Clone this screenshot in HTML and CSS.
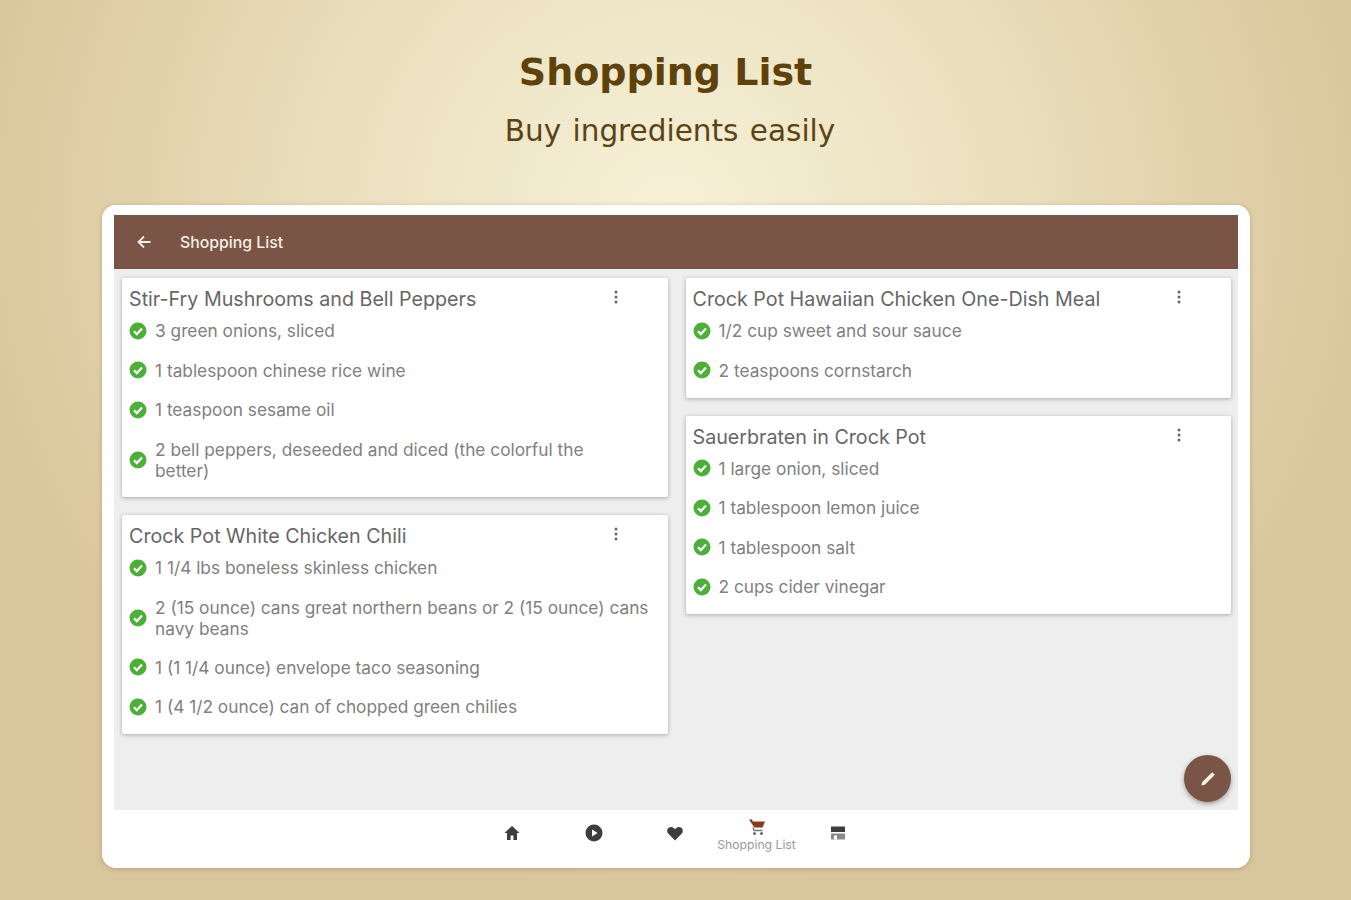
FILE: index.html
```html
<!DOCTYPE html>
<html lang="en">
<head>
<meta charset="UTF-8" />
<title>Shopping List</title>
<link rel="stylesheet" href="styles.css">
</head>
<body>
<svg class="defs" width="0" height="0">
  <symbol id="check" viewBox="0 0 18 18">
    <circle cx="9" cy="9" r="8.5" fill="#4caf38"/>
    <path d="M5 9.3l2.8 2.8L13 6.6" fill="none" stroke="#fff" stroke-width="2.2"/>
  </symbol>
  <symbol id="dots" viewBox="0 0 4 14">
    <circle cx="2" cy="2" r="1.5"/><circle cx="2" cy="7" r="1.5"/><circle cx="2" cy="12" r="1.5"/>
  </symbol>
</svg>

<header class="promo">
  <h1>Shopping List</h1>
  <p>Buy ingredients easily</p>
</header>

<div class="frame">
  <div class="appbar">
    <svg class="back" viewBox="0 0 16 16" width="16" height="16"><path d="M14.5 8H2.5M8 2.5L2.5 8 8 13.5" fill="none" stroke="#f6eee6" stroke-width="1.8"/></svg>
    <span>Shopping List</span>
  </div>

  <div class="content">
    <div class="column">
      <section class="card">
        <div class="card-title"><h2>Stir-Fry Mushrooms and Bell Peppers</h2><svg class="more"><use href="#dots"/></svg></div>
        <ul>
          <li><svg class="tick"><use href="#check"/></svg><span>3 green onions, sliced</span></li>
          <li><svg class="tick"><use href="#check"/></svg><span>1 tablespoon chinese rice wine</span></li>
          <li><svg class="tick"><use href="#check"/></svg><span>1 teaspoon sesame oil</span></li>
          <li class="two-line"><svg class="tick"><use href="#check"/></svg><span>2 bell peppers, deseeded and diced (the colorful the<br>better)</span></li>
        </ul>
      </section>
      <section class="card">
        <div class="card-title"><h2>Crock Pot White Chicken Chili</h2><svg class="more"><use href="#dots"/></svg></div>
        <ul>
          <li><svg class="tick"><use href="#check"/></svg><span>1 1/4 lbs boneless skinless chicken</span></li>
          <li class="two-line"><svg class="tick"><use href="#check"/></svg><span>2 (15 ounce) cans great northern beans or 2 (15 ounce) cans navy beans</span></li>
          <li><svg class="tick"><use href="#check"/></svg><span>1 (1 1/4 ounce) envelope taco seasoning</span></li>
          <li><svg class="tick"><use href="#check"/></svg><span>1 (4 1/2 ounce) can of chopped green chilies</span></li>
        </ul>
      </section>
    </div>
    <div class="column">
      <section class="card">
        <div class="card-title"><h2>Crock Pot Hawaiian Chicken One-Dish Meal</h2><svg class="more"><use href="#dots"/></svg></div>
        <ul>
          <li><svg class="tick"><use href="#check"/></svg><span>1/2 cup sweet and sour sauce</span></li>
          <li><svg class="tick"><use href="#check"/></svg><span>2 teaspoons cornstarch</span></li>
        </ul>
      </section>
      <section class="card">
        <div class="card-title"><h2>Sauerbraten in Crock Pot</h2><svg class="more"><use href="#dots"/></svg></div>
        <ul>
          <li><svg class="tick"><use href="#check"/></svg><span>1 large onion, sliced</span></li>
          <li><svg class="tick"><use href="#check"/></svg><span>1 tablespoon lemon juice</span></li>
          <li><svg class="tick"><use href="#check"/></svg><span>1 tablespoon salt</span></li>
          <li><svg class="tick"><use href="#check"/></svg><span>2 cups cider vinegar</span></li>
        </ul>
      </section>
    </div>
    <button class="fab">
      <svg viewBox="0 0 20 20" width="24" height="24"><path d="M4.5 15.5l.7-2.900 8.300-8.300 2.200 2.200-8.300 8.300z" fill="#f8f1e6"/></svg>
    </button>
  </div>

  <nav class="bottom-nav">
    <div class="nav-item">
      <svg viewBox="0 0 18 18" width="18" height="18"><path d="M9 2L1.5 9H4v7h3.600v-4.600h2.800V16H14V9h2.500z" fill="#3d3d3d"/></svg>
    </div>
    <div class="nav-item">
      <svg viewBox="0 0 18 18" width="18" height="18"><circle cx="9" cy="9" r="8.5" fill="#3d3d3d"/><path d="M7 5.4L12.6 9 7 12.6z" fill="#fff"/></svg>
    </div>
    <div class="nav-item">
      <svg viewBox="0 0 18 18" width="18" height="18"><path d="M9 16.5L2.2 9.6C.2 7.4 1.2 3 5 3c1.800 0 3.100 1 4 2.300C9.900 4 11.200 3 13 3c3.800 0 4.800 4.400 2.800 6.600z" fill="#3d3d3d"/></svg>
    </div>
    <div class="nav-item active">
      <svg viewBox="0 0 18 18" width="18" height="18"><path d="M1 1.5h3l.8 2H17l-2.500 6H6.300z" fill="#8a3a1c"/><path d="M5 9.5L6 12.500H14.500" fill="none" stroke="#777" stroke-width="1.4"/><circle cx="6.5" cy="15.5" r="1.5" fill="#666"/><circle cx="13.5" cy="15.5" r="1.5" fill="#666"/></svg>
      <span>Shopping List</span>
    </div>
    <div class="nav-item">
      <svg viewBox="0 0 18 18" width="18" height="18"><path d="M2 2.5h14V8H2z" fill="#3d3d3d"/><path d="M2 9.5h14v6H2z" fill="#8a8a8a"/><path d="M5 11.5h3v4H5z" fill="#fff"/></svg>
    </div>
  </nav>
</div>
</body>
</html>
```

FILE: styles.css
```css
* {
  box-sizing: border-box;
}
body {
  margin: 0;
  height: 900px;
  overflow: hidden;
  background: radial-gradient(ellipse 700px 680px at 670px 215px, #f7f1d8 0%, #eadfbc 50%, #dac69c 100%);
  font-family: "Inter", "Liberation Sans", sans-serif;
}
.defs {
  display: block;
  height: 0;
}
.promo {
  text-align: center;
  height: 205px;
  padding-top: 49px;
  font-family: "DejaVu Sans", sans-serif;
}
.promo h1 {
  margin: 0 0 0 -20px;
  font-size: 38px;
  line-height: 46px;
  font-weight: bold;
  color: #5e420c;
}
.promo p {
  margin: 18px 0 0 -11px;
  font-size: 29.5px;
  line-height: 36px;
  color: #5a4416;
  word-spacing: 2px;
}
.frame {
  width: 1148px;
  height: 663px;
  margin-left: 102px;
  padding: 10px 12px;
  background: #fff;
  border-radius: 14px;
  box-shadow: 0 1px 5px rgba(120, 100, 60, 0.35);
  display: flex;
  flex-direction: column;
}
.appbar {
  height: 54px;
  flex-shrink: 0;
  background: #7a5444;
  display: flex;
  align-items: center;
  padding-left: 22px;
  gap: 28px;
  color: #f6eee6;
  font-size: 15.8px;
  font-weight: 500;
}
.content {
  position: relative;
  flex: 1;
  background: #eeeeee;
  display: grid;
  grid-template-columns: 1fr 1fr;
  column-gap: 18px;
  align-items: start;
  padding: 9px 7px 0 8px;
}
.column {
  display: flex;
  flex-direction: column;
  gap: 18px;
}
.card {
  background: #fff;
  border-radius: 2px;
  box-shadow: 0 1px 4px rgba(0, 0, 0, 0.3);
  padding: 8px 8px 7.5px 7px;
}
.card-title {
  display: flex;
  justify-content: space-between;
  height: 25px;
}
.card h2 {
  margin: 0;
  font-size: 19.7px;
  line-height: 27px;
  font-weight: 400;
  color: #666;
}
.more {
  width: 4px;
  height: 14px;
  margin: 4px 42px 0 0;
  fill: #666;
}
.card ul {
  list-style: none;
  margin: 0;
  padding: 0;
}
.card li {
  display: flex;
  align-items: center;
  gap: 8px;
  height: 39.5px;
  font-size: 17.3px;
  line-height: 21px;
  color: #808080;
}
.card li.two-line {
  height: 60px;
}
.card li span {
  flex: 1;
}
.tick {
  width: 18px;
  height: 18px;
  flex-shrink: 0;
}
.fab {
  position: absolute;
  right: 7px;
  bottom: 8px;
  width: 47px;
  height: 47px;
  border: 0;
  padding: 0;
  border-radius: 50%;
  background: #7a5444;
  box-shadow: 0 2px 5px rgba(0, 0, 0, 0.35);
  display: flex;
  align-items: center;
  justify-content: center;
}
.bottom-nav {
  height: 48px;
  flex-shrink: 0;
  background: #fff;
  display: flex;
  justify-content: center;
  padding-right: 2px;
}
.nav-item {
  width: 81.5px;
  display: flex;
  flex-direction: column;
  align-items: center;
  justify-content: center;
  padding-bottom: 2px;
}
.nav-item.active {
  padding: 2px 0 0;
  gap: 2px;
}
.nav-item span {
  font-size: 12.2px;
  line-height: 14px;
  color: #999;
  white-space: nowrap;
}
```
